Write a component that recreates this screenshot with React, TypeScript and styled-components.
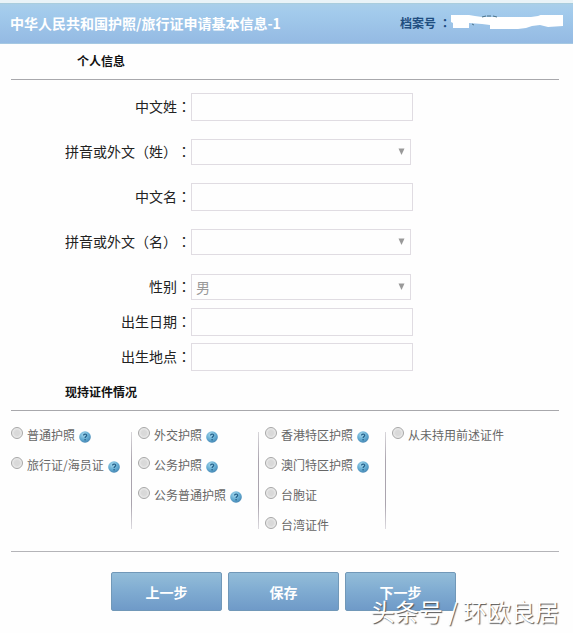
import React from "react";
import styled, { createGlobalStyle } from "styled-components";

const GlobalStyle = createGlobalStyle`
  * { box-sizing: border-box; }
  body {
    margin: 0;
    background: #fefefe;
    color: #222;
    font-family: "Noto Sans CJK SC", sans-serif;
    font-size: 14px;
    text-spacing-trim: space-all;
  }
`;

const Page = styled.main`
  position: relative;
  border-top: 3px solid #e9f3f7;
  padding-bottom: 22px;
`;

const Header = styled.header`
  display: flex;
  align-items: center;
  justify-content: space-between;
  height: 41px;
  padding: 0 10px 2px;
  color: #fff;
  background: linear-gradient(#a9cfe9, #a3cbec 20%, #94bae3);
  border-top: 1px solid #a9cddd;
  border-bottom: 1px solid #a5c8e2;
`;

const Title = styled.h1`
  margin: 0;
  font-size: 14px;
  line-height: 20px;
  font-weight: 700;
`;

const FileNumber = styled.div`
  display: flex;
  align-items: center;
  font-size: 12px;
  line-height: 20px;
  font-weight: 700;
  color: #1f4e80;
`;

const Colon = styled.span`
  font-family: "Noto Sans CJK TC", sans-serif;
`;

const FileColon = styled(Colon)`
  margin-left: 3px;
`;

const Content = styled.form`
  padding: 0 14px 0 11px;
`;

const SectionTitle = styled.h2<{ $indent: number }>`
  margin: 0;
  padding: 0 0 0 ${(p) => p.$indent}px;
  height: 36px;
  border-bottom: 1px solid #a8a8ac;
  font-size: 12px;
  line-height: 34px;
  font-weight: 700;
  color: #111;
`;

const Fields = styled.div`
  padding: 9px 0 1px;
`;

const Row = styled.div<{ $loose?: boolean }>`
  display: grid;
  grid-template-columns: 180px minmax(0, 222px);
  align-items: center;
  height: 35px;
  margin-bottom: ${(p) => (p.$loose ? 10 : 0)}px;
`;

const Label = styled.label`
  padding-bottom: 2px;
  text-align: right;
  line-height: 20px;
  white-space: nowrap;
`;

const TextInput = styled.input`
  width: 100%;
  height: 28px;
  padding: 0 4px;
  border: 1px solid #e0dce2;
  background: #fefefe;
  font: inherit;
  outline: none;
`;

const SelectBox = styled.div`
  display: grid;
  align-items: center;
  margin-right: 2px;
  > * { grid-area: 1 / 1; }
`;

const Select = styled.select`
  appearance: none;
  width: 100%;
  height: 26px;
  padding: 0 20px 0 4px;
  border: 1px solid #e0dce2;
  border-radius: 0;
  background: #fefefe;
  color: #999;
  font: inherit;
  outline: none;
`;

const Arrow = styled.svg`
  justify-self: end;
  margin-right: 6px;
  pointer-events: none;
`;

const Documents = styled.div`
  display: grid;
  grid-template-columns: 120fr 127fr 127fr 174fr;
  padding: 9px 0 13px;
  border-bottom: 1px solid #b4b4b8;
`;

const Column = styled.div<{ $divided: boolean }>`
  padding: 0 0 0 ${(p) => (p.$divided ? 7 : 0)}px;
  height: 118px;
  background: ${(p) =>
    p.$divided
      ? "linear-gradient(#d8d6da, #aaa4ae 30%, #aaa4ae 75%, #dddbe0) 0 12px / 1px 97px no-repeat"
      : "none"};
`;

const Option = styled.div`
  display: flex;
  align-items: center;
  height: 30px;
  font-size: 12px;
  line-height: 20px;
  color: #666;
  white-space: nowrap;
`;

const Radio = styled.input`
  appearance: none;
  flex: none;
  width: 12px;
  height: 12px;
  margin: 0 4px 4px 0;
  border: 1px solid #a6a6a6;
  border-radius: 50%;
  background: radial-gradient(#d9d9d9 35%, #eee 75%);
  &:checked { background: radial-gradient(#555 30%, #eee 40%); }
`;

const Help = styled.button`
  flex: none;
  display: block;
  width: 12px;
  height: 12px;
  margin: 4px 0 0 4px;
  padding: 0;
  border: 0;
  background: none;
  > svg { display: block; }
`;

const Actions = styled.div`
  display: flex;
  justify-content: center;
  gap: 6px;
  padding: 20px 3px 0 0;
`;

const ActionButton = styled.button`
  width: 111px;
  height: 39px;
  border: 1px solid #7198b8;
  border-radius: 2px;
  background: linear-gradient(#93bdd9, #7fabd1 50%, #6f9ac8);
  color: #fff;
  font: inherit;
  font-weight: 700;
`;

const Watermark = styled.div`
  position: absolute;
  right: 14px;
  bottom: 4px;
  color: #fff;
  font-size: 24px;
  line-height: 36px;
  text-shadow: 1px 1px 1px #555;
  white-space: pre;
  pointer-events: none;
`;

const HelpIcon = () => (
  <svg width="12" height="12" viewBox="0 0 12 12" aria-hidden="true">
    <defs>
      <radialGradient id="ball" cx="0.4" cy="0.3" r="0.7">
        <stop offset="0" stopColor="#a5d8ee" />
        <stop offset="0.6" stopColor="#64acd2" />
        <stop offset="1" stopColor="#4687b4" />
      </radialGradient>
    </defs>
    <circle cx="6" cy="6" r="5.8" fill="url(#ball)" />
    <path d="M4.5 4.6c0-2 3.2-2 3.2-.2 0 1.200-1.600 1.200-1.600 2.600" fill="none" stroke="#245f88" strokeWidth="1.200" />
    <circle cx="6.100" cy="8.700" r="0.800" fill="#245f88" />
  </svg>
);

const Redaction = () => (
  <svg width="112" height="16" viewBox="0 0 112 16" aria-hidden="true">
    <path
      d="M0 0h18l6 1 7 1h49l7-1 5-2h20v12l-15 1-8-2-8 1-6 2-8 1H39v-4l-8-1-13-1v5H2V8L0 7z"
      fill="#fff"
    />
    <path d="M31 2l4-1M36 1h4M42 1l4 1M21 9l2 1" stroke="#4b7187" strokeWidth="1" />
  </svg>
);

type Field = { id: string; label: string; loose?: boolean; options?: string[] };

const fields: Field[] = [
  { id: "surname", label: "中文姓", loose: true },
  { id: "surname-latin", label: "拼音或外文（姓）", loose: true, options: [""] },
  { id: "given", label: "中文名", loose: true },
  { id: "given-latin", label: "拼音或外文（名）", loose: true, options: [""] },
  { id: "sex", label: "性别", options: ["男", "女"] },
  { id: "birth-date", label: "出生日期" },
  { id: "birth-place", label: "出生地点" },
];

const documents: { name: string; help?: boolean }[][] = [
  [
    { name: "普通护照", help: true },
    { name: "旅行证/海员证", help: true },
  ],
  [
    { name: "外交护照", help: true },
    { name: "公务护照", help: true },
    { name: "公务普通护照", help: true },
  ],
  [
    { name: "香港特区护照", help: true },
    { name: "澳门特区护照", help: true },
    { name: "台胞证" },
    { name: "台湾证件" },
  ],
  [{ name: "从未持用前述证件" }],
];

export default function App() {
  return (
    <>
      <GlobalStyle />
      <Page lang="zh-CN">
        <Header>
          <Title>中华人民共和国护照/旅行证申请基本信息-1</Title>
          <FileNumber>
            档案号<FileColon lang="zh-TW">：</FileColon>
            <Redaction />
          </FileNumber>
        </Header>
        <Content onSubmit={(e) => e.preventDefault()}>
          <SectionTitle $indent={66}>个人信息</SectionTitle>
          <Fields>
            {fields.map((f) => (
              <Row key={f.id} $loose={f.loose}>
                <Label htmlFor={f.id}>
                  {f.label}
                  <Colon lang="zh-TW">：</Colon>
                </Label>
                {f.options ? (
                  <SelectBox>
                    <Select id={f.id}>
                      {f.options.map((o) => (
                        <option key={o}>{o}</option>
                      ))}
                    </Select>
                    <Arrow width="7" height="7" viewBox="0 0 7 7" aria-hidden="true">
                      <path d="M0.500 0.500h6L3.500 7z" fill="#999" />
                    </Arrow>
                  </SelectBox>
                ) : (
                  <TextInput id={f.id} type="text" />
                )}
              </Row>
            ))}
          </Fields>
          <SectionTitle $indent={54}>现持证件情况</SectionTitle>
          <Documents>
            {documents.map((column, i) => (
              <Column key={i} $divided={i > 0}>
                {column.map((d, j) => (
                  <Option key={d.name}>
                    <Radio type="radio" name="document" id={`doc-${i}-${j}`} />
                    <label htmlFor={`doc-${i}-${j}`}>{d.name}</label>
                    {d.help && (
                      <Help type="button" aria-label={`${d.name}说明`}>
                        <HelpIcon />
                      </Help>
                    )}
                  </Option>
                ))}
              </Column>
            ))}
          </Documents>
          <Actions>
            <ActionButton type="button">上一步</ActionButton>
            <ActionButton type="button">保存</ActionButton>
            <ActionButton type="submit">下一步</ActionButton>
          </Actions>
        </Content>
        <Watermark>头条号 / 环欧良居</Watermark>
      </Page>
    </>
  );
}
